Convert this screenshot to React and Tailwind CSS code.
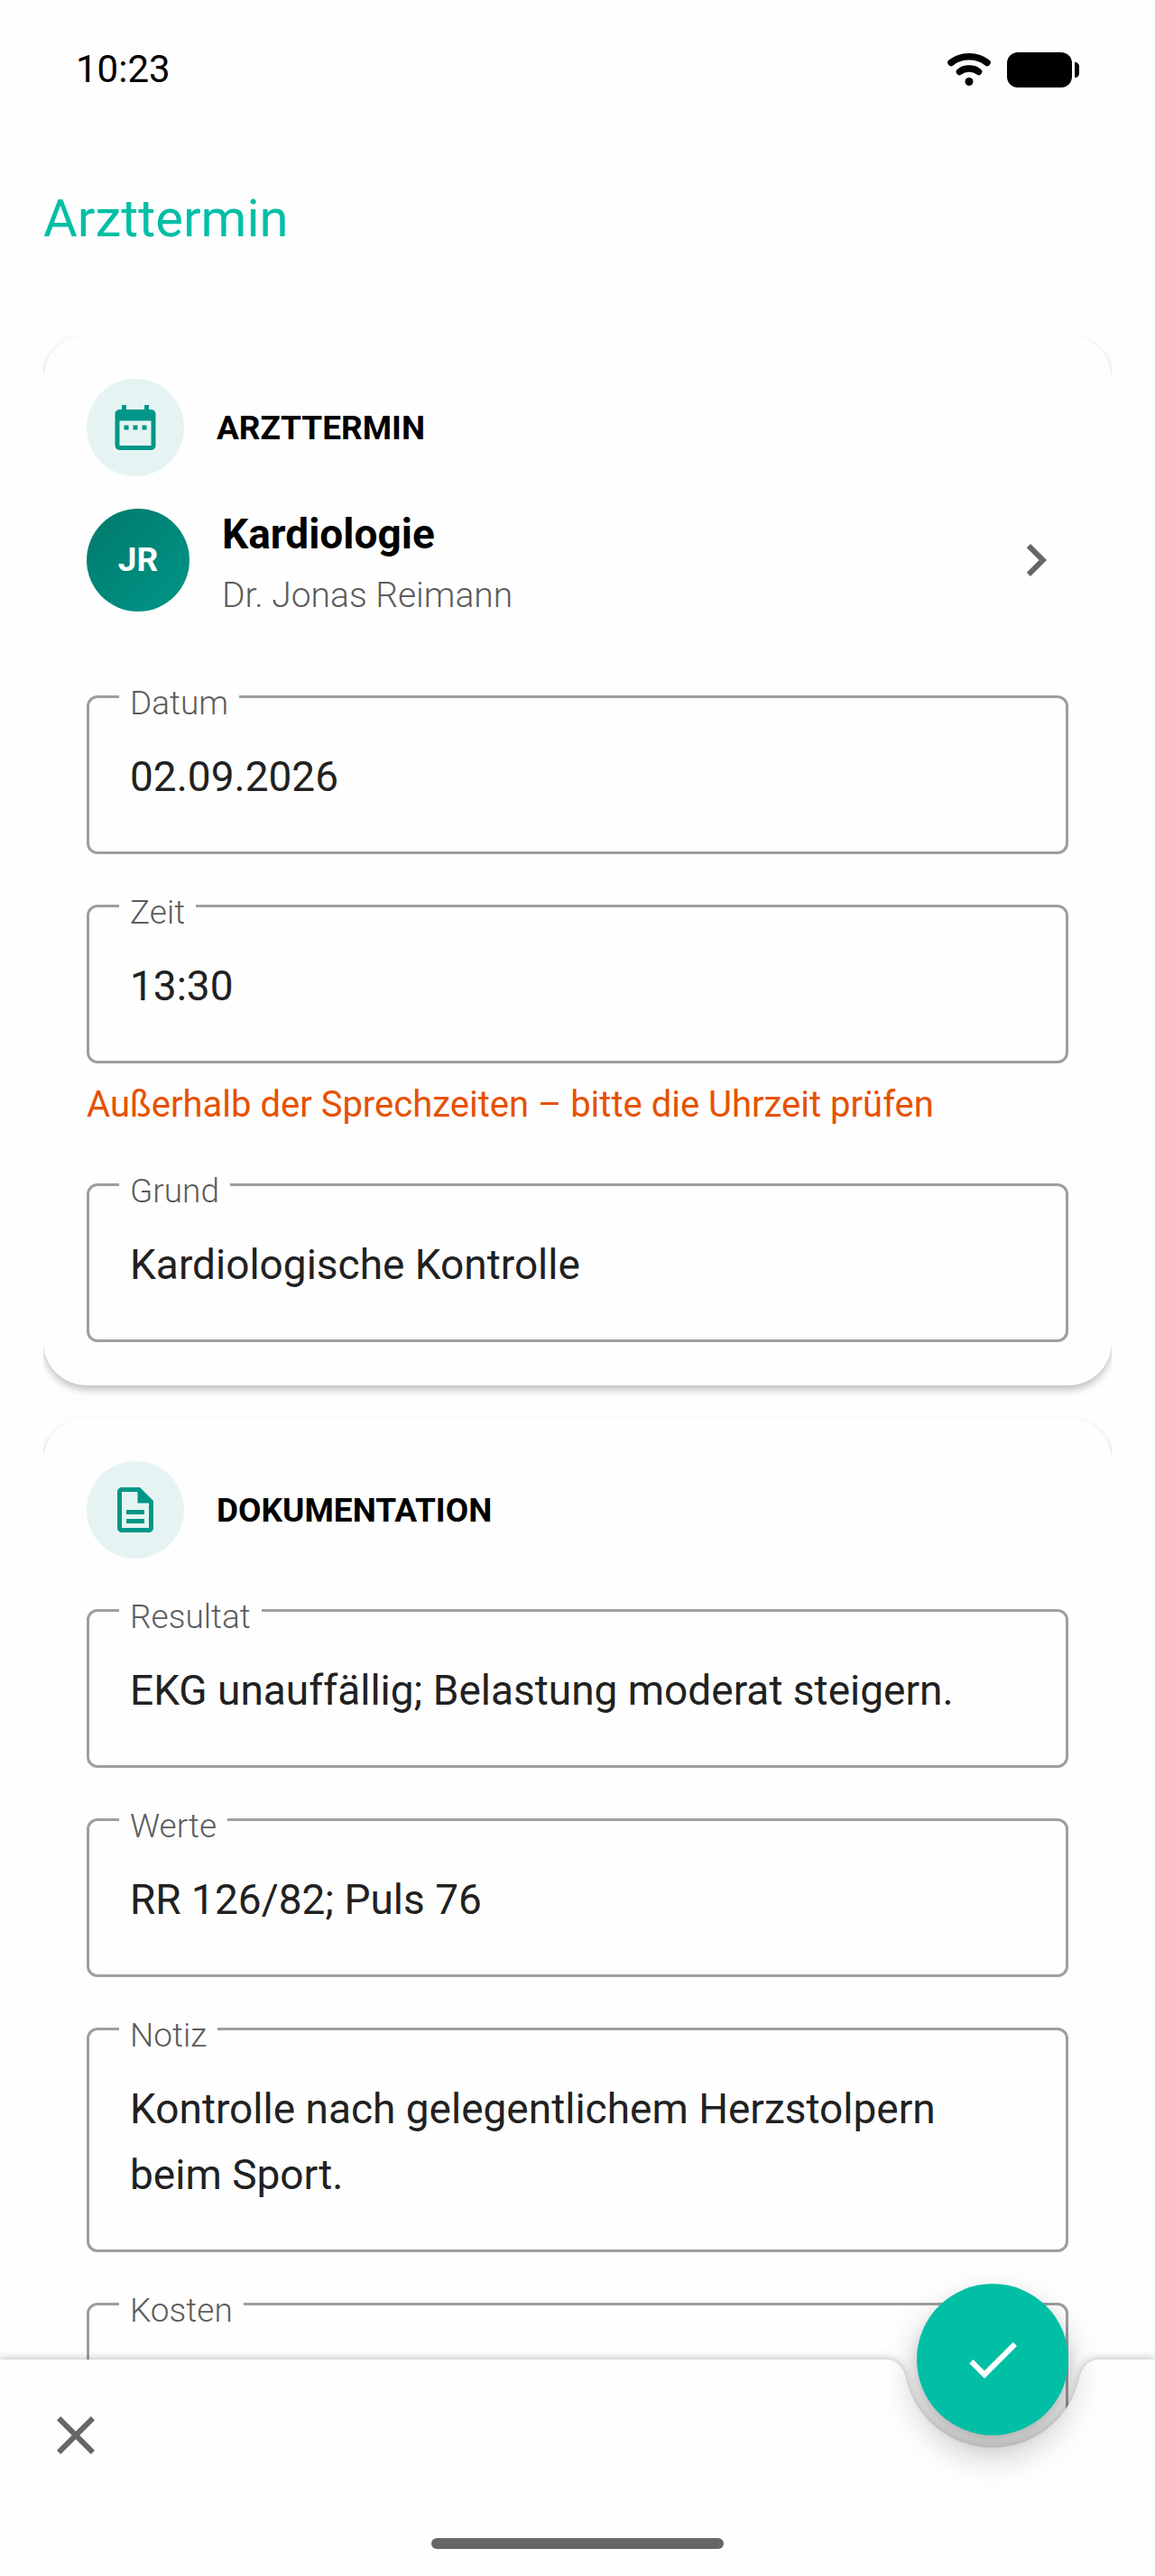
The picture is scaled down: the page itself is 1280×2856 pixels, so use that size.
import { useState } from 'react';
import { MdCheck, MdChevronRight, MdClose, MdDateRange, MdOutlineDescription } from 'react-icons/md';

const StatusBar = () => (
  <div className="flex h-[154px] items-center justify-between px-21">
    <span className="text-[42px] leading-none text-black">10:23</span>
    <div className="flex items-center gap-[18px]">
      <svg className="h-9 w-12" viewBox="0 0 48 36" fill="none" stroke="black" strokeLinecap="round">
        <path d="M4 10.5C15 1.5 33 1.5 44 10.5" strokeWidth="7.5" />
        <path d="M13.5 20.5C19 15.8 29 15.8 34.5 20.5" strokeWidth="7.5" />
        <circle cx="24" cy="31.5" r="4.5" fill="black" stroke="none" />
      </svg>
      <svg className="h-[39px] w-20" viewBox="0 0 80 39">
        <rect width="72" height="39" rx="12" />
        <path d="M75 11c3 0 5 2 5 5v7c0 3-2 5-5 5z" />
      </svg>
    </div>
  </div>
);

const SectionHeader = ({ icon: Icon, title }) => (
  <div className="flex items-center gap-9">
    <span className="flex size-27 items-center justify-center rounded-full bg-[#e5f4f3]">
      <Icon className="size-15 text-[#009688]" />
    </span>
    <h2 className="text-[37px] leading-none font-bold text-black uppercase">{title}</h2>
  </div>
);

const Field = ({ id, label, value, onChange, rows }) => {
  const Control = rows ? 'textarea' : 'input';
  return (
    <div className="relative rounded-xl border-3 border-[#9e9e9e]">
      <label
        htmlFor={id}
        className="absolute -top-[15px] left-[33px] bg-[#fefefe] px-3 text-[37px] leading-[42px] font-light text-[#5c5c5c]"
      >
        {label}
      </label>
      <Control
        id={id}
        name={id}
        rows={rows}
        value={value}
        onChange={(e) => onChange(id, e.target.value)}
        className="block w-full resize-none overflow-hidden bg-transparent px-[45px] pt-[51px] pb-[46px] text-[46px] leading-[73px] text-[#212121] outline-none"
      />
    </div>
  );
};

const Card = ({ children }) => (
  <section className="rounded-[48px] bg-[#fefefe] p-12 shadow-[0_5px_9px_rgba(0,0,0,0.24)]">
    {children}
  </section>
);

const BottomBar = () => (
  <footer className="fixed inset-x-0 bottom-0 h-60">
    {/* Bar surface, the right part carries the notch for the save button */}
    <div className="absolute inset-0 flex drop-shadow-[0_-1px_5px_rgba(0,0,0,0.25)]">
      <div className="flex-1 bg-[#fefefe]" />
      <svg className="h-60 w-80" viewBox="0 0 320 240" fill="#fefefe">
        <path d="M0 0H21Q39 0 44 21A98.5 98.5 0 0 0 236 21Q241 0 259 0H320V240H0Z" />
      </svg>
    </div>

    <div className="relative flex h-full flex-col items-start justify-between px-12 pt-12 pb-[30px]">
      <button type="button" aria-label="Schließen">
        <MdClose className="size-18 text-[#666666]" />
      </button>
      <span className="h-3 w-81 self-center rounded-full bg-[#666666]" />
    </div>

    <button
      type="button"
      aria-label="Speichern"
      className="absolute -top-21 right-24 flex size-42 items-center justify-center rounded-full bg-[#00bfa5] shadow-[0_8px_16px_rgba(0,0,0,0.12),0_20px_40px_rgba(0,0,0,0.24)]"
    >
      <MdCheck className="size-18 text-white" />
    </button>
  </footer>
);

const App = () => {
  const [form, setForm] = useState({
    datum: '02.09.2026',
    zeit: '13:30',
    grund: 'Kardiologische Kontrolle',
    resultat: 'EKG unauffällig; Belastung moderat steigern.',
    werte: 'RR 126/82; Puls 76',
    notiz: 'Kontrolle nach gelegentlichem Herzstolpern beim Sport.',
    kosten: ''
  });

  const handleChange = (id, value) => setForm({ ...form, [id]: value });

  return (
    <div className="h-screen overflow-y-auto bg-[#fefefe] font-[Roboto,'Liberation_Sans',sans-serif] [scrollbar-width:none]">
      <StatusBar />

      <header className="flex h-[176px] items-center px-12">
        <h1 className="text-[58px] leading-none text-[#00bfa5]">Arzttermin</h1>
      </header>

      <main className="mx-12 mt-[42px] flex flex-col gap-9 overflow-hidden pb-72">
        <Card>
          <SectionHeader icon={MdDateRange} title="Arzttermin" />

          <button type="button" className="mt-9 flex w-full items-start gap-9 text-left">
            <span className="flex size-[114px] items-center justify-center rounded-full bg-linear-to-br from-[#00796b] to-[#009688] text-[37px] font-bold text-white">
              JR
            </span>
            <span className="flex flex-1 flex-col gap-3">
              <span className="text-[46px] leading-[56px] font-bold text-black">Kardiologie</span>
              <span className="text-[39px] leading-[56px] font-light text-[#5c5c5c]">Dr. Jonas Reimann</span>
            </span>
            <span className="flex h-[114px] items-center">
              <MdChevronRight className="size-18 text-[#666666]" />
            </span>
          </button>

          <div className="mt-[83px] flex flex-col gap-14">
            <Field id="datum" label="Datum" value={form.datum} onChange={handleChange} />
            <div>
              <Field id="zeit" label="Zeit" value={form.zeit} onChange={handleChange} />
              <p className="mt-5 mb-[5px] text-[40px] leading-[52px] text-[#e65100]">
                Außerhalb der Sprechzeiten – bitte die Uhrzeit prüfen
              </p>
            </div>
            <Field id="grund" label="Grund" value={form.grund} onChange={handleChange} />
          </div>
        </Card>

        <Card>
          <SectionHeader icon={MdOutlineDescription} title="Dokumentation" />

          <div className="mt-14 flex flex-col gap-14">
            <Field id="resultat" label="Resultat" value={form.resultat} onChange={handleChange} />
            <Field id="werte" label="Werte" value={form.werte} onChange={handleChange} />
            <Field id="notiz" label="Notiz" value={form.notiz} onChange={handleChange} rows={2} />
            <Field id="kosten" label="Kosten" value={form.kosten} onChange={handleChange} />
          </div>
        </Card>
      </main>

      <BottomBar />
    </div>
  );
};

export default App;
